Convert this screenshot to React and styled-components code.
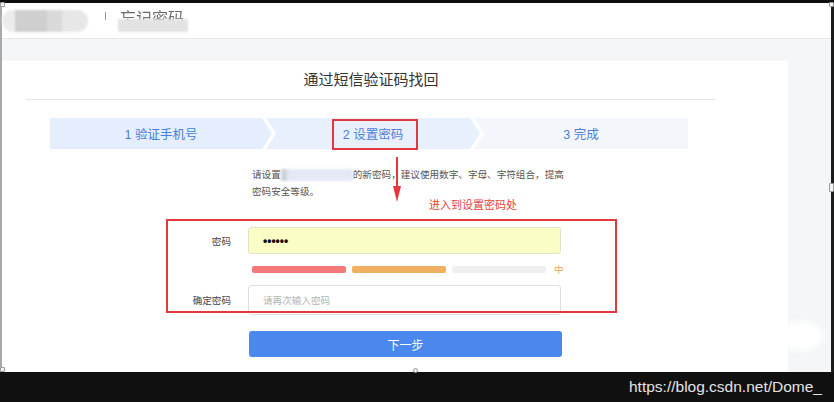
import styled, { createGlobalStyle } from "styled-components";

/* ===== GLOBAL ===== */

const GlobalStyle = createGlobalStyle`
html, body{
margin:0;
padding:0;
background:#fff;
}
body{
font-family:"Liberation Sans","Noto Sans CJK SC",sans-serif;
}
`;

/* ===== FRAME ===== */

const Screen = styled.div`
position:relative;
width:834px;
height:402px;
display:flex;
flex-direction:column;
overflow:hidden;
background:#fff;
`;

const TopStrip = styled.div`
flex:none;
height:3px;
background:#0e0e0e;
`;

const Window = styled.div`
flex:1;
min-height:0;
display:flex;
flex-direction:column;
border-left:2px solid #a9a9a9;
border-right:3px solid #1b1b1b;
`;

const Header = styled.div`
flex:none;
height:35px;
display:flex;
align-items:center;
background:#fff;
border-bottom:1px solid #e6e6e6;
`;

const BlurLogo = styled.div`
width:86px;
height:22px;
border-radius:11px;
background:linear-gradient(90deg,#ececec 0 13px,#cfcfcf 13px 45px,#d9d9d9 45px 60px,#e7e7e7 60px 86px);
filter:blur(1.2px);
`;

const HeaderBar = styled.div`
align-self:flex-start;
margin:9px 0 0 17px;
width:1px;
height:8px;
background:#9a9a9a;
`;

const HeaderTitle = styled.div`
position:relative;
align-self:flex-start;
margin:6px 0 0 14px;
font-size:16px;
line-height:20px;
color:#6a6a6a;
filter:blur(0.4px);

&::after{
content:"";
position:absolute;
left:-2px;
right:-4px;
top:10px;
height:13px;
background:#e3e3e3;
filter:blur(1px);
}
`;

const Body = styled.div`
flex:1;
min-height:0;
display:flex;
padding-top:22px;
background:#f5f6f8;
`;

const Card = styled.div`
width:786px;
padding-left:24px;
box-sizing:border-box;
background:#fff;
`;

const Content = styled.div`
position:relative;
width:690px;
display:flex;
flex-direction:column;
`;

/* ===== TITLE + STEPS ===== */

const Title = styled.div`
height:38px;
line-height:38px;
text-align:center;
font-size:15px;
color:#333;
border-bottom:1px solid #e5e9ef;
`;

const Steps = styled.div`
display:flex;
width:638px;
height:31px;
margin:18px 0 0 24px;
`;

const clips = {
  first: "polygon(0 0, calc(100% - 10px) 0, 100% 50%, calc(100% - 10px) 100%, 0 100%)",
  middle: "polygon(0 0, calc(100% - 10px) 0, 100% 50%, calc(100% - 10px) 100%, 0 100%, 10px 50%)",
  last: "polygon(0 0, 100% 0, 100% 100%, 0 100%, 10px 50%)",
};

const Step = styled.div`
flex:none;
width:${(p) => p.$w}px;
margin-left:${(p) => (p.$pos === "first" ? 0 : -6)}px;
display:flex;
align-items:center;
justify-content:center;
font-size:12.5px;
color:#4b7fd5;
background:${(p) => p.$bg};
clip-path:${(p) => clips[p.$pos]};
`;

/* ===== NOTE ===== */

const Note = styled.div`
margin:17px 0 0 226px;
font-size:9.6px;
line-height:17px;
color:#555;
white-space:nowrap;
`;

const Hidden = styled.span`
display:inline-block;
width:72px;
height:12px;
vertical-align:middle;
background:linear-gradient(90deg,#cfd3da 0 6px,#e4e9f3 6px 100%);
filter:blur(1.3px);
`;

/* ===== FORM ===== */

const Form = styled.div`
margin-top:27px;
display:flex;
flex-direction:column;
`;

const Row = styled.div`
display:flex;
align-items:center;
gap:17px;
margin-top:${(p) => p.$gap || 0}px;
`;

const Label = styled.div`
width:205px;
text-align:right;
font-size:9.6px;
color:#444;
`;

const Field = styled.input`
width:313px;
height:${(p) => (p.$filled ? 27 : 30)}px;
box-sizing:border-box;
padding:0 0 0 14px;
border:1px solid ${(p) => (p.$filled ? "#e1e4c4" : "#dcdfe6")};
border-radius:3px;
background:${(p) => (p.$filled ? "#fafdc6" : "#fff")};
font-family:"Liberation Sans","Noto Sans CJK SC",sans-serif;
font-size:${(p) => (p.$filled ? "12px" : "9.6px")};
font-weight:${(p) => (p.$filled ? 700 : 400)};
color:#111;
outline:none;

&::placeholder{
color:#b3b3b3;
}
`;

const Strength = styled.div`
display:flex;
align-items:center;
gap:6px;
height:7px;
margin:12px 0 0 226px;
`;

const Bar = styled.div`
width:94px;
height:7px;
border-radius:2px;
background:${(p) => p.$c};
`;

const Level = styled.span`
margin-left:2px;
font-size:9.6px;
line-height:7px;
color:#eea35a;
`;

const NextButton = styled.button`
width:313px;
height:26px;
margin:16px 0 0 223px;
border:none;
border-radius:3px;
background:#4a88ee;
color:#fff;
font-family:"Liberation Sans","Noto Sans CJK SC",sans-serif;
font-size:12px;
`;

/* ===== ANNOTATIONS ===== */

const MarkBox = styled.div`
position:absolute;
left:${(p) => p.$x}px;
top:${(p) => p.$y}px;
width:${(p) => p.$w}px;
height:${(p) => p.$h}px;
box-sizing:border-box;
border:2px solid #e3383c;
pointer-events:none;
`;

const Arrow = styled.svg`
position:absolute;
left:365px;
top:96px;
`;

const AnnoText = styled.div`
position:absolute;
left:403px;
top:137px;
font-size:11px;
line-height:14px;
color:#e8413c;
white-space:nowrap;
`;

/* ===== BOTTOM ===== */

const BottomBar = styled.div`
flex:none;
height:30px;
display:flex;
align-items:center;
justify-content:flex-end;
padding-right:12px;
background:#101010;
`;

const Watermark = styled.span`
font-size:15.5px;
color:#e4e4e4;
`;

const Handle = styled.div`
position:absolute;
left:${(p) => p.$x}px;
top:${(p) => p.$y}px;
width:5px;
height:${(p) => p.$h || 5}px;
box-sizing:border-box;
border:1px solid #9a9a9a;
background:#f2f2f2;
border-radius:${(p) => (p.$round ? "50%" : "1px")};
`;

const Smudge = styled.div`
position:absolute;
left:782px;
top:322px;
width:40px;
height:28px;
border-radius:45%;
background:#fff;
filter:blur(3px);
`;

/* ===== COMPONENT ===== */

export default function App() {
  return (
    <Screen>
      <GlobalStyle />
      <TopStrip />

      <Window>
        <Header>
          <BlurLogo />
          <HeaderBar />
          <HeaderTitle>忘记密码</HeaderTitle>
        </Header>

        <Body>
          <Card>
            <Content>
              <Title>通过短信验证码找回</Title>

              <Steps>
                <Step $pos="first" $w={222} $bg="#e5eefc">1 验证手机号</Step>
                <Step $pos="middle" $w={214} $bg="#e8f0fd">2 设置密码</Step>
                <Step $pos="last" $w={214} $bg="#f3f6fb">3 完成</Step>
              </Steps>

              <Note>
                请设置<Hidden />的新密码，建议使用数字、字母、字符组合，提高
                <br />
                密码安全等级。
              </Note>

              <Form>
                <Row>
                  <Label>密码</Label>
                  <Field $filled readOnly value="••••••" />
                </Row>

                <Strength>
                  <Bar $c="#f47878" />
                  <Bar $c="#efb061" />
                  <Bar $c="#eef0ef" />
                  <Level>中</Level>
                </Strength>

                <Row $gap={12}>
                  <Label>确定密码</Label>
                  <Field readOnly placeholder="请再次输入密码" />
                </Row>

                <NextButton>下一步</NextButton>
              </Form>

              <MarkBox $x={306} $y={58} $w={86} $h={31} />
              <Arrow width="12" height="46" viewBox="0 0 12 46">
                <line x1="6" y1="0" x2="6" y2="32" stroke="#e3383c" strokeWidth="2" />
                <polygon points="2,29 10,29 6,45" fill="#e3383c" />
              </Arrow>
              <AnnoText>进入到设置密码处</AnnoText>
              <MarkBox $x={140} $y={158} $w={451} $h={94} />
            </Content>
          </Card>
        </Body>
      </Window>

      <BottomBar>
        <Watermark>https://blog.csdn.net/Dome_</Watermark>
      </BottomBar>

      <Smudge />
      <Handle $x={0} $y={2} />
      <Handle $x={829} $y={2} />
      <Handle $x={829} $y={183} $h={9} />
      <Handle $x={0} $y={367} />
      <Handle $x={413} $y={368} $round />
    </Screen>
  );
}
